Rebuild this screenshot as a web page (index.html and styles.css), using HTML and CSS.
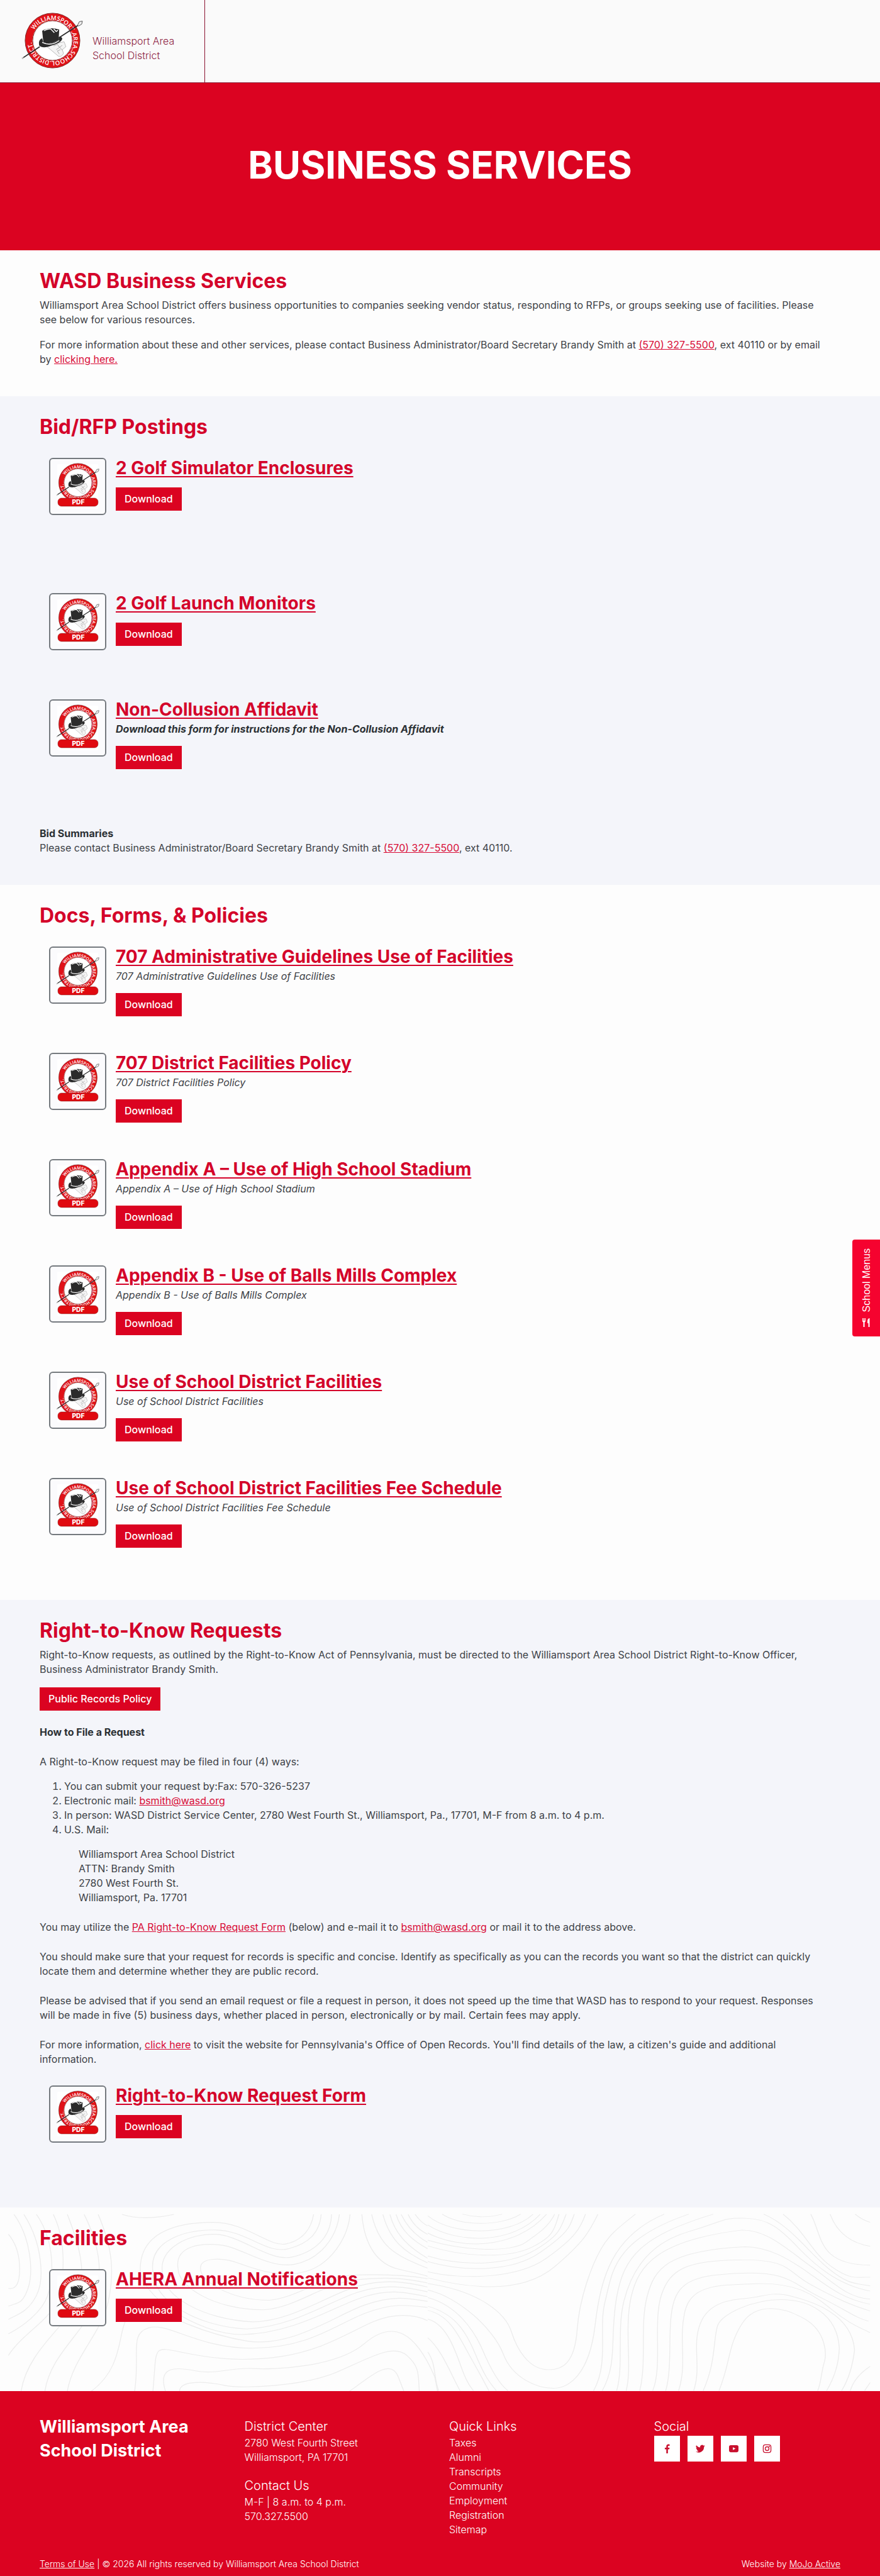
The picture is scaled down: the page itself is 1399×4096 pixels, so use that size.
FILE: index.html
```html
<!DOCTYPE html>
<html lang="en">
<head>
    <meta charset="UTF-8">
    <meta name="viewport" content="width=device-width, initial-scale=1.0">
    <title>Business Services - Williamsport Area School District</title>
    <link rel="stylesheet" href="styles.css">
</head>
<body>

    <!-- Shared symbols: district seal and PDF badge -->
    <svg class="sprite" aria-hidden="true">
        <defs>
            <path id="sealText" d="M20.5 29.5 A35.2 35.2 0 0 1 81.5 64.5 A35.2 35.2 0 0 1 20.5 29.5"/>
        </defs>
        <symbol id="seal" viewBox="0 0 102 94">
            <circle cx="51" cy="47" r="39" fill="none" stroke="#e01218" stroke-width="12"/>
            <circle cx="51" cy="47" r="45" fill="none" stroke="#7d2a2a" stroke-width="1"/>
            <circle cx="51" cy="47" r="32.5" fill="#fff" stroke="#7d2a2a" stroke-width="1"/>
            <text class="seal-text"><textPath href="#sealText">WILLIAMSPORT.AREA.SCHOOL.DISTRICT.</textPath></text>
            <path d="M42 57 L61 73 Q66 74 69 68 L67 62 L73 57 L70 49 L60 51 Z" fill="#f4f4f4" stroke="#aaa" stroke-width=".8"/>
            <path d="M53 56 l6 -3 l3 5 l5 -3 M57 62 l6 -4 l4 5 M62 69 l-3 -5 l5 -2" fill="none" stroke="#999" stroke-width=".8"/>
            <path d="M3 75 L30 57 M62 42 L93 22" stroke="#2b2b2b" stroke-width="1.8"/>
            <path d="M92 22 l3 -6 l5 -1 l-1 5 l-5 3 z" fill="#eee" stroke="#555" stroke-width="1"/>
            <circle cx="2" cy="76" r="1.5" fill="#bbb"/>
            <path d="M34 43 Q27 46 29 55 Q35 61 50 55 Q67 50 67 43 Q65 40 61 41 L61 46 Q48 54 36 51 Z" fill="#2b2b2b"/>
            <path d="M36 51 L34 31 Q46 24 62 29 L61 46 Q48 54 36 51 Z" fill="#2b2b2b"/>
            <path d="M37 31 Q43 27 48 28 L54 34 M53 28 L57 32 L60 30 M34 50 Q48 57 62 47" fill="none" stroke="#fff" stroke-width="1.5"/>
        </symbol>
        <symbol id="pdf" viewBox="0 0 94 94">
            <rect x="12" y="9" width="70" height="76" fill="#fff"/>
            <use href="#seal" x="10" y="6" width="75" height="69"/>
            <rect x="12" y="74" width="71" height="6" fill="#fff"/>
            <rect x="13" y="67" width="69" height="14" rx="6" fill="#e00a10" stroke="#8a2020" stroke-width=".6"/>
            <text class="pdf-text" x="48" y="78" text-anchor="middle">PDF</text>
        </symbol>
    </svg>

    <header class="site-header">
        <a href="#" class="brand">
            <svg class="brand-logo" role="img" aria-label="District seal"><use href="#seal"/></svg>
            <span>Williamsport Area<br>School District</span>
        </a>
    </header>

    <div class="hero">
        <h1>BUSINESS SERVICES</h1>
    </div>

    <main>
        <section class="section">
            <h2>WASD Business Services</h2>
            <p>Williamsport Area School District offers business opportunities to companies seeking vendor status, responding to RFPs, or groups seeking use of facilities. Please see below for various resources.</p>
            <p>For more information about these and other services, please contact Business Administrator/Board Secretary Brandy Smith at <a href="#">(570) 327-5500</a>, ext 40110 or by email by <a href="#">clicking here.</a></p>
        </section>

        <section class="section section-gray">
            <h2>Bid/RFP Postings</h2>
            <div class="docs">
                <div class="doc doc-tall">
                    <svg class="doc-icon" aria-hidden="true"><use href="#pdf"/></svg>
                    <div>
                        <h3><a href="#">2 Golf Simulator Enclosures</a></h3>
                        <a href="#" class="btn">Download</a>
                    </div>
                </div>
                <div class="doc">
                    <svg class="doc-icon" aria-hidden="true"><use href="#pdf"/></svg>
                    <div>
                        <h3><a href="#">2 Golf Launch Monitors</a></h3>
                        <a href="#" class="btn">Download</a>
                    </div>
                </div>
                <div class="doc">
                    <svg class="doc-icon" aria-hidden="true"><use href="#pdf"/></svg>
                    <div>
                        <h3><a href="#">Non-Collusion Affidavit</a></h3>
                        <p class="doc-desc"><strong>Download this form for instructions for the Non-Collusion Affidavit</strong></p>
                        <a href="#" class="btn">Download</a>
                    </div>
                </div>
            </div>
            <p class="bid-note"><strong>Bid Summaries</strong><br>Please contact Business Administrator/Board Secretary Brandy Smith at <a href="#">(570) 327-5500</a>, ext 40110.</p>
        </section>

        <section class="section">
            <h2>Docs, Forms, &amp; Policies</h2>
            <div class="docs">
                <div class="doc">
                    <svg class="doc-icon" aria-hidden="true"><use href="#pdf"/></svg>
                    <div>
                        <h3><a href="#">707 Administrative Guidelines Use of Facilities</a></h3>
                        <p class="doc-desc">707 Administrative Guidelines Use of Facilities</p>
                        <a href="#" class="btn">Download</a>
                    </div>
                </div>
                <div class="doc">
                    <svg class="doc-icon" aria-hidden="true"><use href="#pdf"/></svg>
                    <div>
                        <h3><a href="#">707 District Facilities Policy</a></h3>
                        <p class="doc-desc">707 District Facilities Policy</p>
                        <a href="#" class="btn">Download</a>
                    </div>
                </div>
                <div class="doc">
                    <svg class="doc-icon" aria-hidden="true"><use href="#pdf"/></svg>
                    <div>
                        <h3><a href="#">Appendix A – Use of High School Stadium</a></h3>
                        <p class="doc-desc">Appendix A – Use of High School Stadium</p>
                        <a href="#" class="btn">Download</a>
                    </div>
                </div>
                <div class="doc">
                    <svg class="doc-icon" aria-hidden="true"><use href="#pdf"/></svg>
                    <div>
                        <h3><a href="#">Appendix B - Use of Balls Mills Complex</a></h3>
                        <p class="doc-desc">Appendix B - Use of Balls Mills Complex</p>
                        <a href="#" class="btn">Download</a>
                    </div>
                </div>
                <div class="doc">
                    <svg class="doc-icon" aria-hidden="true"><use href="#pdf"/></svg>
                    <div>
                        <h3><a href="#">Use of School District Facilities</a></h3>
                        <p class="doc-desc">Use of School District Facilities</p>
                        <a href="#" class="btn">Download</a>
                    </div>
                </div>
                <div class="doc">
                    <svg class="doc-icon" aria-hidden="true"><use href="#pdf"/></svg>
                    <div>
                        <h3><a href="#">Use of School District Facilities Fee Schedule</a></h3>
                        <p class="doc-desc">Use of School District Facilities Fee Schedule</p>
                        <a href="#" class="btn">Download</a>
                    </div>
                </div>
            </div>
        </section>

        <section class="section section-gray">
            <h2>Right-to-Know Requests</h2>
            <p>Right-to-Know requests, as outlined by the Right-to-Know Act of Pennsylvania, must be directed to the Williamsport Area School District Right-to-Know Officer, Business Administrator Brandy Smith.</p>
            <a href="#" class="btn btn-policy">Public Records Policy</a>
            <div class="request-info">
                <p><strong>How to File a Request</strong></p>
                <p>A Right-to-Know request may be filed in four (4) ways:</p>
                <ol>
                    <li>You can submit your request by:Fax: 570-326-5237</li>
                    <li>Electronic mail: <a href="#">bsmith@wasd.org</a></li>
                    <li>In person: WASD District Service Center, 2780 West Fourth St., Williamsport, Pa., 17701, M-F from 8 a.m. to 4 p.m.</li>
                    <li>U.S. Mail:</li>
                </ol>
                <address>
                    Williamsport Area School District<br>
                    ATTN: Brandy Smith<br>
                    2780 West Fourth St.<br>
                    Williamsport, Pa. 17701
                </address>
                <p>You may utilize the <a href="#">PA Right-to-Know Request Form</a> (below) and e-mail it to <a href="#">bsmith@wasd.org</a> or mail it to the address above.</p>
                <p>You should make sure that your request for records is specific and concise. Identify as specifically as you can the records you want so that the district can quickly locate them and determine whether they are public record.</p>
                <p>Please be advised that if you send an email request or file a request in person, it does not speed up the time that WASD has to respond to your request. Responses will be made in five (5) business days, whether placed in person, electronically or by mail. Certain fees may apply.</p>
                <p>For more information, <a href="#">click here</a> to visit the website for Pennsylvania's Office of Open Records. You'll find details of the law, a citizen's guide and additional information.</p>
            </div>
            <div class="docs">
                <div class="doc">
                    <svg class="doc-icon" aria-hidden="true"><use href="#pdf"/></svg>
                    <div>
                        <h3><a href="#">Right-to-Know Request Form</a></h3>
                        <a href="#" class="btn">Download</a>
                    </div>
                </div>
            </div>
        </section>

        <section class="section section-topo">
            <!-- Topographic line backdrop -->
            <svg class="topo" viewBox="0 0 1440 301" preserveAspectRatio="none" aria-hidden="true">
                <g transform="translate(0 -13) scale(.459 .393)">
                    <path d="M435 62 Q510 90 620 62"/>
                    <path d="M30 145 Q70 200 70 290 T30 370"/>
                    <path d="M50 62 C110 160 120 300 100 370 S60 430 30 445"/>
                    <path d="M85 62 C150 180 160 330 130 400 S60 480 30 500"/>
                    <path d="M130 62 C200 180 190 330 170 400 S80 530 30 560"/>
                    <path d="M190 62 C240 180 230 350 200 430 S80 560 30 650"/>
                    <path d="M240 62 C280 180 310 300 280 410 S100 620 75 800"/>
                    <path d="M300 62 C350 180 370 290 340 420 S180 640 160 800"/>
                    <path d="M350 62 C400 200 410 300 385 430 S260 660 240 800"/>
                    <path d="M325 800 C440 700 420 560 450 500 S500 420 545 450 S720 560 880 590 S1200 480 1300 440 S1450 410 1524 425"/>
                    <path d="M860 563 C700 560 500 400 500 290 C500 130 640 95 760 95 S960 200 1020 185 S1110 120 1118 62 M860 563 C1050 560 1200 440 1300 405 S1450 390 1524 405"/>
                    <path d="M880 540 C700 530 545 420 545 300 C530 170 660 125 770 127 S950 230 1030 205 S1140 130 1145 62 M880 540 C1050 530 1180 420 1280 385 S1450 365 1524 385"/>
                    <path d="M900 510 C720 500 580 400 580 310 C560 200 680 140 770 145 S960 260 1040 240 S1180 160 1182 62 M900 510 C1040 510 1180 390 1280 360 S1450 345 1524 365"/>
                    <path d="M940 460 C760 460 635 360 635 290 C620 190 720 180 790 190 S960 290 1050 270 S1200 160 1210 62 M940 460 C1060 450 1150 350 1270 335 S1450 330 1524 348"/>
                    <path d="M960 420 C820 420 715 340 715 290 C710 240 790 240 850 265 S1000 330 1090 300 S1240 160 1248 62 M960 420 C1060 410 1150 320 1260 315 S1450 315 1524 330"/>
                    <path d="M1290 62 C1300 200 1350 270 1420 290 S1500 310 1524 320"/>
                    <path d="M1325 62 C1350 190 1400 230 1524 286"/>
                    <path d="M1365 62 C1390 170 1440 220 1524 264"/>
                    <path d="M1390 62 C1410 150 1460 200 1524 245"/>
                    <path d="M1412 62 C1430 130 1470 170 1524 205"/>
                    <path d="M1430 62 C1450 110 1480 150 1524 178"/>
                    <path d="M1455 62 C1470 100 1490 125 1524 145"/>
                    <path d="M1480 62 Q1500 95 1524 110"/>
                    <path d="M480 800 C500 640 460 560 530 535 S700 620 900 620 S1200 520 1300 475 S1450 440 1524 450"/>
                    <path d="M545 800 C560 620 540 610 640 635 S850 680 1000 655 S1250 550 1330 510 S1480 480 1524 505"/>
                    <path d="M590 800 C560 690 630 700 700 715 S820 700 900 705 S1200 700 1300 600 S1480 550 1550 740 L1560 800"/>
                    <path d="M640 800 C640 750 740 760 800 775 S1080 780 1200 720 S1400 600 1450 650 S1490 740 1495 800"/>
                    <path d="M1245 800 C1300 760 1390 650 1420 740 L1440 800"/>
                </g>
                <g transform="translate(700 -13) scale(.4719 .3333)">
                    <path d="M120 72 Q190 98 258 72"/>
                    <path d="M50 72 C110 130 250 135 322 72"/>
                    <path d="M0 80 C80 175 280 185 365 72"/>
                    <path d="M0 125 C100 215 290 225 390 72"/>
                    <path d="M0 165 C110 245 300 250 412 72"/>
                    <path d="M0 200 C130 255 290 260 340 210 S420 130 440 72"/>
                    <path d="M0 228 C130 285 280 290 360 235 S440 140 455 72"/>
                    <path d="M0 278 C120 330 280 325 370 250 S460 140 480 72"/>
                    <path d="M0 305 C120 355 290 360 390 260 S490 140 508 72"/>
                    <path d="M0 355 C120 395 310 390 410 290 S530 140 547 72"/>
                    <path d="M0 385 C180 450 340 450 440 330 S560 160 590 72"/>
                    <path d="M0 413 C180 450 270 560 290 650 S350 830 410 836 S510 800 518 640 S570 320 600 245 S660 140 720 72"/>
                    <path d="M0 445 C110 480 230 640 262 760 S380 928 435 928 S560 860 580 620 S640 180 820 72"/>
                    <path d="M0 482 C100 520 160 640 190 740 S250 910 278 940"/>
                    <path d="M0 525 C90 560 130 640 165 760 S220 910 238 940"/>
                    <path d="M0 545 C80 570 110 680 150 780 S200 910 212 940"/>
                    <path d="M0 588 C60 610 90 720 115 820 S150 920 158 940"/>
                    <path d="M0 680 C50 740 80 860 112 940"/>
                    <path d="M0 750 C30 810 20 880 38 940"/>
                    <path d="M575 940 C630 800 590 640 615 500 S640 200 905 72"/>
                    <path d="M605 940 C660 800 630 680 655 480 S740 180 990 72"/>
                    <path d="M655 940 C680 820 655 640 680 500 S760 220 900 160 S1020 90 1100 92 S1220 140 1280 230 S1420 420 1534 450"/>
                    <path d="M688 940 C710 820 680 640 705 480 S800 200 1090 150 C1180 150 1250 250 1330 330 S1450 480 1534 490"/>
                    <path d="M735 940 C760 800 735 620 760 480 S830 250 1100 232 C1180 232 1250 290 1320 360 S1440 490 1534 515"/>
                    <path d="M780 940 C815 820 780 600 810 470 S900 300 1080 297 S1240 350 1330 420 S1470 520 1534 548"/>
                    <path d="M825 940 C850 820 830 640 850 520 S930 370 1090 362 S1260 410 1360 480 S1480 580 1528 598"/>
                    <path d="M870 940 C900 800 870 700 890 560 S1000 420 1140 414 S1340 470 1400 540 S1500 630 1534 655"/>
                    <path d="M922 940 C950 820 915 720 945 610 S1060 490 1110 485 S1190 450 1260 475 S1470 560 1480 740 Q1470 860 1435 940"/>
                    <path d="M955 940 C1000 800 990 680 1005 620 S1130 492 1225 492 S1420 560 1427 730 Q1425 840 1383 940"/>
                    <path d="M1010 940 C1050 800 1040 720 1090 610 S1240 530 1310 590 S1385 760 1375 800 S1365 900 1352 940"/>
                    <path d="M1165 72 C1260 130 1320 260 1390 340 S1480 410 1534 425"/>
                    <path d="M1232 72 C1310 160 1330 260 1400 330 S1490 380 1534 382"/>
                    <path d="M1328 72 C1370 180 1350 320 1534 323"/>
                    <path d="M1395 72 Q1430 205 1534 230"/>
                    <path d="M1482 72 Q1505 100 1534 112"/>
                    <path d="M1465 940 Q1480 870 1534 820 M1515 940 L1534 900"/>
                </g>
            </svg>
            <h2>Facilities</h2>
            <div class="docs">
                <div class="doc">
                    <svg class="doc-icon" aria-hidden="true"><use href="#pdf"/></svg>
                    <div>
                        <h3><a href="#">AHERA Annual Notifications</a></h3>
                        <a href="#" class="btn">Download</a>
                    </div>
                </div>
            </div>
        </section>
    </main>

    <footer class="site-footer">
        <div class="footer-cols">
            <div class="footer-name">Williamsport Area<br>School District</div>
            <div class="footer-col">
                <h4>District Center</h4>
                <p>2780 West Fourth Street<br>Williamsport, PA 17701</p>
                <h4>Contact Us</h4>
                <p>M-F | 8 a.m. to 4 p.m.<br>570.327.5500</p>
            </div>
            <div class="footer-col">
                <h4>Quick Links</h4>
                <ul>
                    <li><a href="#">Taxes</a></li>
                    <li><a href="#">Alumni</a></li>
                    <li><a href="#">Transcripts</a></li>
                    <li><a href="#">Community</a></li>
                    <li><a href="#">Employment</a></li>
                    <li><a href="#">Registration</a></li>
                    <li><a href="#">Sitemap</a></li>
                </ul>
            </div>
            <div class="footer-col">
                <h4>Social</h4>
                <div class="social">
                    <a href="#" aria-label="Facebook"><svg viewBox="0 0 16 16"><path d="M9.400 16V9h2.400l.4-2.700H9.400V4.600c0-.8.3-1.500 1.500-1.500h1.400V.7C11.900.6 11.200.5 10.300.5 8.200.5 6.700 1.800 6.700 4.200v2.100H4.200V9h2.500v7z"/></svg></a>
                    <a href="#" aria-label="Twitter"><svg viewBox="0 0 24 24"><path d="M23.600 4.900a9.600 9.600 0 0 1-2.800.8 4.800 4.800 0 0 0 2.100-2.700 9.700 9.700 0 0 1-3.100 1.200 4.800 4.800 0 0 0-8.300 4.400A13.700 13.700 0 0 1 1.600 3.500a4.800 4.800 0 0 0 1.500 6.500 4.800 4.800 0 0 1-2.200-.6c0 2.400 1.700 4.400 3.900 4.900a4.800 4.800 0 0 1-2.200.1 4.900 4.900 0 0 0 4.500 3.400A9.800 9.800 0 0 1 0 19.700a13.700 13.700 0 0 0 21.100-12.300 9.800 9.800 0 0 0 2.500-2.500z"/></svg></a>
                    <a href="#" aria-label="YouTube"><svg viewBox="0 0 16 16"><path fill-rule="evenodd" d="M3 2h10a3 3 0 0 1 3 3v6a3 3 0 0 1-3 3H3a3 3 0 0 1-3-3V5a3 3 0 0 1 3-3zM6.500 5.500v5l4.500-2.500z"/></svg></a>
                    <a href="#" aria-label="Instagram"><svg viewBox="0 0 16 16"><g fill="none" stroke="currentColor" stroke-width="1.400"><rect x="1.500" y="1.500" width="13" height="13" rx="3.500"/><circle cx="8" cy="8" r="3.200"/></g><circle cx="11.800" cy="4.200" r="1"/></svg></a>
                </div>
            </div>
        </div>
        <div class="footer-bottom">
            <div><a href="#">Terms of Use</a> | © 2026 All rights reserved by Williamsport Area School District</div>
            <div>Website by <a href="#">MoJo Active</a></div>
        </div>
    </footer>

    <a href="#" class="menus-tab">
        <svg viewBox="0 0 16 16" aria-hidden="true"><path d="M2 1v4.500a2.300 2.300 0 0 0 1.500 2.100V15h2V7.600A2.300 2.300 0 0 0 7 5.500V1H5.900v4h-.8V1H3.900v4h-.8V1zM13 1c-2 .5-3 2.500-3 5v3h1.500v6h2V1z"/></svg>
        <span>School Menus</span>
    </a>

</body>
</html>
```

FILE: styles.css
```css
* {
    box-sizing: border-box;
}
body {
    margin: 0;
    font-family: Inter, 'Open Sans', sans-serif;
    font-size: 16px;
    line-height: 23px;
    color: #3d4247;
    background-color: #fdfdfd;
}
a {
    color: #d80a35;
}
h1, h2, h3, h4, p, ul {
    margin: 0;
}
strong {
    color: #2b3034;
}
.sprite {
    position: absolute;
    width: 0;
    height: 0;
}
.seal-text {
    font-family: 'Open Sans', sans-serif;
    font-size: 10px;
    font-weight: 600;
    fill: #fff;
}
.pdf-text {
    font-family: Inter, sans-serif;
    font-size: 11px;
    font-weight: 800;
    fill: #fff;
}

/* Header */
.site-header {
    display: flex;
    border-bottom: 1px solid #8a1230;
    background-color: #fafafa;
}
.brand {
    display: flex;
    align-items: flex-start;
    gap: 14px;
    width: 326px;
    height: 131px;
    padding: 19px 0 0 34px;
    border-right: 1px solid #8a1230;
    color: #8d1d42;
    font-weight: 300;
    text-decoration: none;
}
.brand span {
    margin-top: 35px;
}
.brand-logo {
    width: 99px;
    height: 91px;
}

/* Hero */
.hero {
    display: flex;
    align-items: center;
    justify-content: center;
    min-height: 266px;
    padding-bottom: 6px;
    background-color: #db0321;
}
.hero h1 {
    color: #fff;
    font-size: 60px;
    line-height: 70px;
    font-weight: 700;
}

/* Sections */
.section {
    padding: 30px 63px 47px;
}
.section-gray {
    background-color: #f4f5fa;
}
.section h2 {
    margin-bottom: 8px;
    color: #d4032a;
    font-size: 32px;
    line-height: 38px;
    font-weight: 700;
}
.section p {
    margin-bottom: 17px;
    padding-right: 24px;
}
.section p:last-child {
    margin-bottom: 0;
}
.section-topo {
    position: relative;
}
.section-topo h2, .section-topo .docs {
    position: relative;
}
.topo {
    position: absolute;
    top: 0;
    left: 0;
    width: 100%;
    height: 100%;
    fill: none;
    stroke: #ececec;
    stroke-width: 3;
}

/* Documents */
.docs {
    margin: 30px 15px 0;
}
.doc {
    display: flex;
    gap: 15px;
    min-height: 147px;
    margin-bottom: 22px;
}
.doc-tall {
    margin-bottom: 68px;
}
.doc:last-child {
    margin-bottom: 0;
}
.doc-icon {
    flex: none;
    width: 91px;
    height: 91px;
    border: 2px solid #74797e;
    border-radius: 6px;
    background-color: #fbfbfd;
}
.doc h3 {
    font-size: 28px;
    line-height: 32px;
    font-weight: 700;
}
.doc h3 a {
    color: #d4032a;
    text-decoration-thickness: 2px;
    text-underline-offset: 3px;
}
.section .doc-desc {
    margin: 4px 0 0;
    font-style: italic;
}
.btn {
    display: inline-block;
    margin-top: 15px;
    padding: 7px 14px;
    background-color: #db0321;
    color: #fff;
    font-weight: 500;
    text-decoration: none;
}
.section .bid-note {
    margin-top: 55px;
}
.btn-policy {
    margin-top: 0;
}

/* Right-to-Know text */
.request-info {
    margin-top: 23px;
}
.section .request-info p {
    margin-bottom: 24px;
}
.section .request-info p:last-child {
    margin-bottom: 0;
}
.request-info ol {
    margin: -8px 0 16px;
    padding-left: 39px;
}
.request-info address {
    margin: 0 0 24px 62px;
    font-style: normal;
}

/* Footer */
.site-footer {
    padding: 38px 63px 8px;
    background-color: #db0321;
    color: #fff;
    font-weight: 300;
}
.site-footer a {
    color: #fff;
}
.footer-cols {
    display: grid;
    grid-template-columns: repeat(4, 1fr);
    gap: 29px;
}
.footer-name {
    font-size: 27px;
    line-height: 38px;
    font-weight: 700;
}
.footer-col {
    padding-top: 6px;
}
.footer-col h4 {
    margin-bottom: 3px;
    font-size: 20px;
    line-height: 24px;
    font-weight: 300;
}
.footer-col p + h4 {
    margin-top: 21px;
}
.footer-col ul {
    padding: 0;
    list-style: none;
}
.footer-col li a {
    text-decoration: none;
}
.social {
    display: flex;
    gap: 12px;
}
.site-footer .social a {
    display: flex;
    align-items: center;
    justify-content: center;
    width: 41px;
    height: 41px;
    background-color: #fff;
    color: #c8102e;
}
.social svg {
    width: 15px;
    height: 15px;
    fill: currentColor;
}
.footer-bottom {
    display: flex;
    justify-content: space-between;
    margin-top: 31px;
    font-size: 14px;
}

/* School menus side tab */
.menus-tab {
    position: fixed;
    top: 50%;
    right: 0;
    display: flex;
    flex-direction: column-reverse;
    align-items: center;
    justify-content: center;
    gap: 9px;
    width: 44px;
    height: 154px;
    border-radius: 4px 0 0 4px;
    background-color: #f5032f;
    color: #fff;
    font-family: 'Liberation Sans', Arial, sans-serif;
    font-size: 16px;
    text-decoration: none;
    transform: translateY(-50%);
}
.menus-tab span {
    writing-mode: vertical-rl;
    transform: rotate(180deg);
}
.menus-tab svg {
    width: 16px;
    height: 16px;
    fill: #fff;
}
```
